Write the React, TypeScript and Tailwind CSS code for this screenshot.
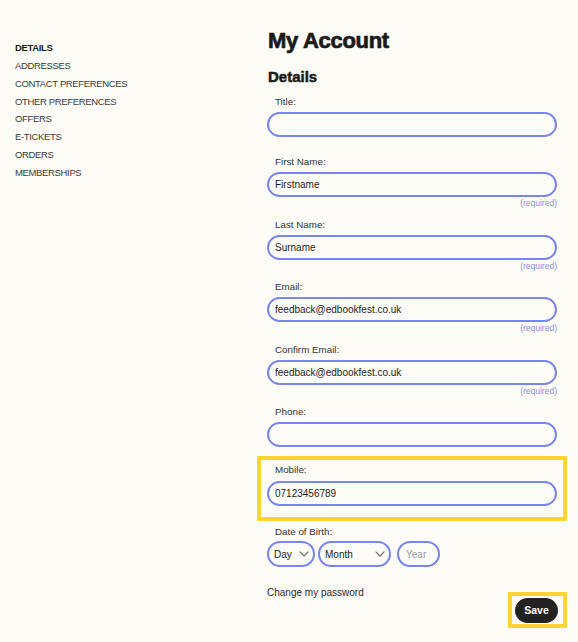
import React from "react";

const navItems = [
  "DETAILS",
  "ADDRESSES",
  "CONTACT PREFERENCES",
  "OTHER PREFERENCES",
  "OFFERS",
  "E-TICKETS",
  "ORDERS",
  "MEMBERSHIPS",
];

function Chevron() {
  return (
    <svg width="10" height="6" viewBox="0 0 10 6" fill="none" className="shrink-0">
      <path d="M1 1l4 4 4-4" stroke="#7a7a7a" strokeWidth="1.2" strokeLinecap="round" strokeLinejoin="round" />
    </svg>
  );
}

function Field({
  label,
  value,
  required,
  mb,
}: {
  label: string;
  value?: string;
  required?: boolean;
  mb: string;
}) {
  return (
    <div className={mb}>
      <div className="pl-[8px] text-[9.8px] leading-[12px] text-[#333]">{label}</div>
      <div className="mt-[4px] h-[25px] rounded-full border-2 border-[#7785f3] flex items-center px-[6px] text-[10px] text-[#1c1c1c]">
        {value}
      </div>
      {required && (
        <div className="text-right text-[8.5px] leading-[13px] text-[#8391e8]">(required)</div>
      )}
    </div>
  );
}

export default function App() {
  return (
    <div
      className="w-[578px] h-[642px] bg-[#fefcf6] flex overflow-hidden"
      style={{ fontFamily: '"Liberation Sans", Arial, sans-serif' }}
    >
      <nav className="w-[267px] shrink-0 pl-[15px] pt-[39px]">
        {navItems.map((item, i) => (
          <div
            key={item}
            className={`text-[9.5px] leading-[17.86px] tracking-[-0.35px] ${
              i === 0 ? "font-bold text-[#1a1a1a]" : "text-[#3a3a3a]"
            }`}
          >
            {item}
          </div>
        ))}
      </nav>
      <main className="w-[290px] shrink-0 pt-[30px]">
        <h1 className="text-[22px] leading-[22px] font-bold text-[#1a1a1a] tracking-[-0.3px] pl-[1px] [-webkit-text-stroke:0.7px_#1a1a1a]">
          My Account
        </h1>
        <h2 className="mt-[17px] text-[15px] leading-[15px] font-bold text-[#1a1a1a] pl-[1px] [-webkit-text-stroke:0.5px_#1a1a1a]">
          Details
        </h2>
        <div className="mt-[12px]">
          <Field label="Title:" mb="mb-[19px]" />
          <Field label="First Name:" value="Firstname" required mb="mb-[9px]" />
          <Field label="Last Name:" value="Surname" required mb="mb-[8px]" />
          <Field label="Email:" value="feedback@edbookfest.co.uk" required mb="mb-[9px]" />
          <Field label="Confirm Email:" value="feedback@edbookfest.co.uk" required mb="mb-[8px]" />
          <Field label="Phone:" mb="mb-[9px]" />
          <div className="-mx-[10px] border-4 border-[#fcd535] px-[6px] pt-[4px] pb-[11px]">
            <div className="pl-[8px] text-[9.8px] leading-[12px] text-[#333]">Mobile:</div>
            <div className="mt-[5px] h-[25px] rounded-full border-2 border-[#7785f3] flex items-center px-[6px] text-[10px] text-[#1c1c1c]">
              07123456789
            </div>
          </div>
          <div className="mt-[5px]">
            <div className="pl-[8px] text-[9.8px] leading-[12px] text-[#333]">Date of Birth:</div>
            <div className="mt-[3px] flex items-center">
              <div className="w-[48px] h-[26px] rounded-full border-2 border-[#7785f3] flex items-center justify-between pl-[5px] pr-[4px] text-[10px] text-[#1c1c1c]">
                <span>Day</span>
                <Chevron />
              </div>
              <div className="ml-[3px] w-[73px] h-[26px] rounded-full border-2 border-[#7785f3] flex items-center justify-between pl-[5px] pr-[4px] text-[10px] text-[#1c1c1c]">
                <span>Month</span>
                <Chevron />
              </div>
              <div className="ml-[6px] w-[43px] h-[26px] rounded-full border-2 border-[#7785f3] flex items-center pl-[7px] text-[10px] text-[#9a9a9a]">
                Year
              </div>
            </div>
          </div>
          <div className="mt-[20px] flex items-start justify-between">
            <div className="text-[10px] leading-[12px] text-[#2a2a2a]">Change my password</div>
            <div className="mt-[5px] -mr-[10px] border-4 border-[#fcd535] pl-[3px] pr-[5px] pt-[2px] pb-[1px]">
              <div className="w-[43px] h-[25px] rounded-full bg-[#222222] flex items-center justify-center text-white text-[10.5px] font-bold">
                Save
              </div>
            </div>
          </div>
        </div>
      </main>
    </div>
  );
}
